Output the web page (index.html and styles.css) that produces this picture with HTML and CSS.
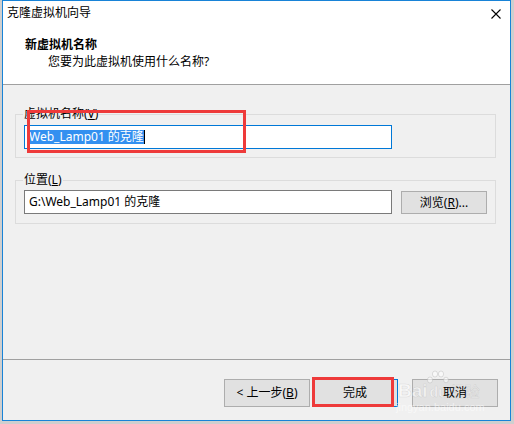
FILE: index.html
```
<!DOCTYPE html>
<html lang="zh-CN">
<head>
<meta charset="utf-8">
<title>克隆虚拟机向导</title>
<link rel="stylesheet" href="styles.css">
</head>
<body>
<div class="win">
  <div class="titlebar">
    <span class="title">克隆虚拟机向导</span>
    <svg class="close" width="10" height="10" viewBox="0 0 10 10"><path d="M0.5 0.5 L9.5 9.5 M9.5 0.5 L0.5 9.5" stroke="#000" stroke-width="1.1" fill="none"/></svg>
  </div>
  <div class="header">
    <div class="h1">新虚拟机名称</div>
    <div class="h2">您要为此虚拟机使用什么名称?</div>
  </div>
  <div class="body">
    <fieldset class="group g1">
      <legend>虚拟机名称(<u>V</u>)</legend>
      <div class="field focused">
        <span class="sel">Web_Lamp01 的克隆</span><span class="caret"></span>
        <div class="annot annot-name"></div>
      </div>
    </fieldset>
    <fieldset class="group g2">
      <legend>位置(<u>L</u>)</legend>
      <div class="row">
        <div class="field"><span class="val">G:\Web_Lamp01 的克隆</span></div>
        <button class="btn btn-browse">浏览(<u>R</u>)...</button>
      </div>
    </fieldset>
  </div>
  <div class="footer">
    <button class="btn">&lt; 上一步(<u>B</u>)</button>
    <button class="btn btn-finish">完成<span class="annot annot-finish"></span></button>
    <button class="btn btn-cancel"><span class="btn-label">取消</span></button>
    <div class="wm">
      <div class="wm-main">
        <span class="wm-bai">Bai</span>
        <span class="wm-du"><svg class="paw" width="24" height="16" viewBox="0 0 24 16"><g fill="rgba(255,255,255,0.55)" stroke="rgba(170,170,170,0.35)" stroke-width="1"><ellipse cx="4" cy="10" rx="2.6" ry="3"/><ellipse cx="9" cy="4" rx="2.6" ry="3"/><ellipse cx="15" cy="4" rx="2.6" ry="3"/><ellipse cx="20" cy="10" rx="2.4" ry="2.8"/></g></svg>du</span>
        <span class="wm-jy">经验</span>
      </div>
      <span class="wm-sub">jingyan.baidu.com</span>
    </div>
  </div>
</div>
</body>
</html>
```
FILE: styles.css
```
html, body {
  margin: 0;
  padding: 0;
}
body {
  width: 514px;
  height: 424px;
  overflow: hidden;
  background: #cfcfcf;
  font-family: "Segoe UI", "Noto Sans", "Noto Sans CJK SC", sans-serif;
  font-size: 12px;
  color: #000;
}
.win {
  margin-left: 2px;
  width: 509px;
  height: 421px;
  box-sizing: border-box;
  border: 1px solid #1883d7;
  background: #f0f0f0;
  display: flex;
  flex-direction: column;
}
.titlebar {
  height: 30px;
  flex: none;
  box-sizing: border-box;
  background: #fff;
  padding: 4px 0 0 4px;
  display: flex;
  align-items: flex-start;
  justify-content: space-between;
}
.title {
  line-height: 16px;
}
.close {
  margin: 4px 9px 0 0;
  display: block;
}
.header {
  height: 54px;
  flex: none;
  box-sizing: border-box;
  background: #fff;
  border-bottom: 1px solid #a0a0a0;
  padding: 5px 0 0 22px;
}
.h1 {
  font-weight: bold;
  line-height: 17px;
}
.h2 {
  line-height: 17px;
  padding-left: 23px;
}
.body {
  height: 275px;
  flex: none;
  box-sizing: border-box;
  border-bottom: 1px solid #a0a0a0;
  padding: 22px 14px 0 12px;
}
.group {
  margin: 0;
  min-width: 0;
  padding: 4px 8px 8px 8px;
  border: 1px solid #dcdcdc;
}
.group legend {
  padding: 0 1px;
  margin-left: -1px;
  line-height: 14px;
}
.g2 {
  margin-top: 15px;
  padding-top: 3px;
  padding-bottom: 9px;
}
.field {
  position: relative;
  width: 368px;
  height: 24px;
  box-sizing: border-box;
  border: 1px solid #7a7a7a;
  background: #fff;
  padding-left: 4px;
  display: flex;
  align-items: center;
}
.field.focused {
  border-color: #0078d7;
}
.sel {
  background: #3390f0;
  color: #fff;
  line-height: 14px;
}
.caret {
  width: 1px;
  height: 14px;
  background: #000;
}
.val {
  line-height: 14px;
}
.row {
  display: flex;
  align-items: flex-start;
}
.btn {
  position: relative;
  width: 86px;
  height: 28px;
  box-sizing: border-box;
  border: 1px solid #adadad;
  background: #e1e1e1;
  margin: 0;
  padding: 0;
  font-family: inherit;
  font-size: 12px;
  color: #000;
  line-height: 14px;
  display: flex;
  align-items: center;
  justify-content: center;
}
.btn-browse {
  height: 23px;
  margin-left: 9px;
  margin-top: 1px;
}
.btn-finish {
  margin-left: 2px;
  border-color: #0078d7;
}
.btn-cancel {
  margin-left: 14px;
}
.btn-label {
  position: relative;
  z-index: 2;
}
.footer {
  position: relative;
  flex: 1;
  padding: 19px 12px 0 0;
  display: flex;
  justify-content: flex-end;
  align-items: flex-start;
}
.annot {
  position: absolute;
  box-sizing: border-box;
  border: 3px solid #ee3a3a;
  pointer-events: none;
  z-index: 3;
}
.annot-name {
  left: 2px;
  top: -16px;
  width: 219px;
  height: 43px;
}
.annot-finish {
  left: -1px;
  top: -3px;
  width: 82px;
  height: 30px;
}
.wm {
  position: absolute;
  left: 392px;
  top: 17px;
  display: flex;
  flex-direction: column;
  pointer-events: none;
  z-index: 1;
}
.wm-main {
  display: flex;
  align-items: flex-end;
  height: 24px;
  font-family: "Liberation Sans", "Noto Sans CJK SC", sans-serif;
  font-weight: bold;
  color: rgba(255, 255, 255, 0.5);
  -webkit-text-stroke: 0.5px rgba(150, 150, 150, 0.3);
}
.wm-bai {
  font-size: 19px;
  line-height: 20px;
  padding-left: 3px;
}
.wm-du {
  position: relative;
  font-size: 14px;
  line-height: 16px;
  padding: 0 2px 1px 2px;
}
.paw {
  position: absolute;
  left: -2px;
  top: -14px;
  display: block;
}
.wm-jy {
  font-size: 15px;
  line-height: 18px;
  font-weight: normal;
  padding-left: 1px;
}
.wm-sub {
  font-family: "Liberation Sans", sans-serif;
  font-size: 11px;
  line-height: 12px;
  color: rgba(255, 255, 255, 0.55);
  padding-left: 1px;
}
```
